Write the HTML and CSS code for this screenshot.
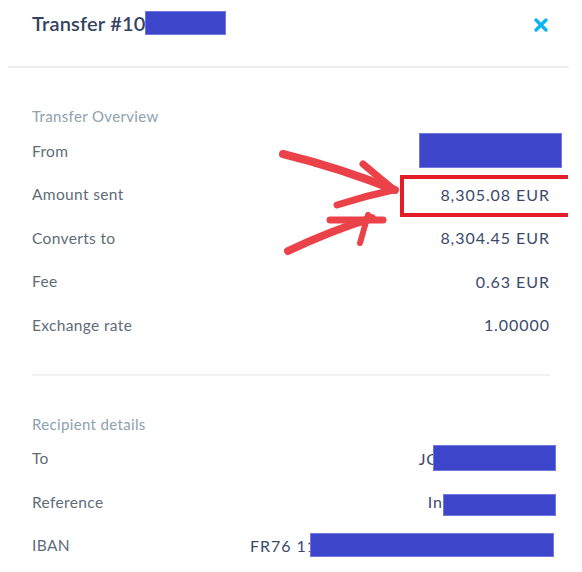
FILE: index.html
```html
<!DOCTYPE html>
<html lang="en">
<head>
<meta charset="utf-8">
<title>Transfer</title>
<link rel="stylesheet" href="styles.css">
</head>
<body>
<div class="page">
  <header class="header">
    <h1 class="title">Transfer #10<span class="redact redact-title"></span></h1>
    <svg class="close" viewBox="0 0 16 16" width="16" height="16" aria-label="Close">
      <path d="M3 3 L13 13 M13 3 L3 13" stroke="#0bb4f5" stroke-width="3.4" stroke-linecap="round" fill="none"/>
    </svg>
  </header>
  <div class="divider-full"></div>

  <section class="section">
    <h2 class="section-title">Transfer Overview</h2>
    <div class="row"><span class="label">From</span><span class="value"><span class="redact redact-from"></span></span></div>
    <div class="row"><span class="label">Amount sent</span><span class="value">8,305.08 EUR</span></div>
    <div class="row"><span class="label">Converts to</span><span class="value">8,304.45 EUR</span></div>
    <div class="row"><span class="label">Fee</span><span class="value">0.63 EUR</span></div>
    <div class="row"><span class="label">Exchange rate</span><span class="value">1.00000</span></div>
  </section>

  <div class="divider-inner"></div>

  <section class="section">
    <h2 class="section-title">Recipient details</h2>
    <div class="row"><span class="label">To</span><span class="value">JC<span class="redact redact-to"></span></span></div>
    <div class="row"><span class="label">Reference</span><span class="value">In<span class="redact redact-ref"></span></span></div>
    <div class="row"><span class="label">IBAN</span><span class="value">FR76 11<span class="redact redact-iban"></span></span></div>
  </section>

  <div class="annot-box"></div>
  <svg class="annot-arrows" width="582" height="572" viewBox="0 0 582 572">
    <defs>
      <filter id="soft" x="-10%" y="-10%" width="120%" height="120%">
        <feGaussianBlur stdDeviation="0.7"/>
      </filter>
    </defs>
    <g stroke="#e8222c" stroke-linecap="round" fill="none" opacity="0.85" filter="url(#soft)">
      <path d="M283 154 Q340 168 395 190" stroke-width="8"/>
      <path d="M363 164 L393 189" stroke-width="7"/>
      <path d="M337 205 Q365 196 393 190" stroke-width="7"/>
      <path d="M288 251 Q330 231 372 218" stroke-width="8"/>
      <path d="M330 220 L383 220" stroke-width="7"/>
      <path d="M368 215 L360 243" stroke-width="6"/>
    </g>
  </svg>
</div>
</body>
</html>
```
FILE: styles.css
```css
* { box-sizing: border-box; }
html, body { margin: 0; padding: 0; background: #ffffff; }
body {
  font-family: Lato, "Open Sans", sans-serif;
  width: 582px;
  height: 572px;
  overflow: hidden;
}
.page {
  position: relative;
  width: 582px;
  height: 572px;
}
.header {
  display: flex;
  align-items: center;
  justify-content: space-between;
  height: 46px;
  padding: 0 33px 0 32px;
}
.title {
  margin: 0;
  display: flex;
  align-items: center;
  font-size: 20px;
  font-weight: 600;
  color: #34435f;
  letter-spacing: 0.2px;
}
.close { display: block; margin-top: 3px; }
.divider-full {
  margin: 20px 13px 0 8px;
  height: 2px;
  background: #eceef2;
}
.section {
  padding: 38px 32px 0 32px;
}
.section-title {
  margin: 0 0 3px 0;
  font-size: 15px;
  line-height: 20px;
  font-weight: 400;
  color: #8ea2ad;
  letter-spacing: 0.35px;
}
.row {
  display: flex;
  align-items: center;
  justify-content: space-between;
  height: 43.5px;
  font-size: 15.5px;
  letter-spacing: 0.35px;
}
.label { color: #5f6c78; }
.value {
  color: #3b4a6c;
  display: flex;
  align-items: center;
  font-size: 16px;
  letter-spacing: 0.95px;
}
.divider-inner {
  margin: 27px 32px 0 32px;
  height: 2px;
  background: #f0f1f3;
}
.redact {
  display: inline-block;
  background: #3d46cb;
  box-shadow: 0 0 0 1px #7077df inset;
}
.redact-title { width: 81px; height: 24px; margin-left: -1px; }
.redact-from { width: 143px; height: 35px; margin-right: -12px; }
.redact-to { width: 123px; height: 26px; margin-left: -5px; margin-right: -6px; }
.redact-ref { width: 113px; height: 22px; margin-left: 0; margin-right: -6px; margin-top: 6px; }
.redact-iban { width: 244px; height: 24px; margin-left: -7px; margin-right: -4px; }
.annot-box {
  position: absolute;
  left: 400px;
  top: 175px;
  width: 168px;
  height: 42px;
  border: 4px solid #e41e27;
  border-right: none;
}
.annot-arrows {
  position: absolute;
  left: 0;
  top: 0;
  pointer-events: none;
}
```
